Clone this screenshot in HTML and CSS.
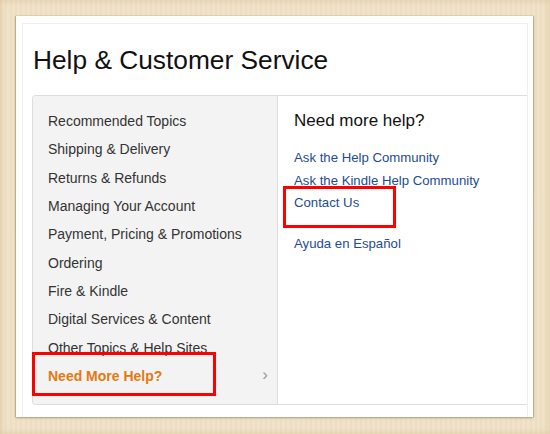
FILE: index.html
```html
<!DOCTYPE html>
<html lang="en">
<head>
  <meta charset="UTF-8">
  <title>Help &amp; Customer Service</title>
  <link rel="stylesheet" href="styles.css">
</head>
<body>
  <div class="frame">
    <div class="sheet">
      <div class="page">
        <h1>Help &amp; Customer Service</h1>
        <div class="help-box">
          <ul class="topics">
            <li>Recommended Topics</li>
            <li>Shipping &amp; Delivery</li>
            <li>Returns &amp; Refunds</li>
            <li>Managing Your Account</li>
            <li>Payment, Pricing &amp; Promotions</li>
            <li>Ordering</li>
            <li>Fire &amp; Kindle</li>
            <li>Digital Services &amp; Content</li>
            <li>Other Topics &amp; Help Sites</li>
            <li class="active">Need More Help?<span class="chevron">&#8250;</span></li>
          </ul>
          <div class="more">
            <h2>Need more help?</h2>
            <ul class="links">
              <li><a href="#">Ask the Help Community</a></li>
              <li><a href="#">Ask the Kindle Help Community</a></li>
              <li><a href="#">Contact Us</a></li>
              <li class="spaced"><a href="#">Ayuda en Español</a></li>
            </ul>
          </div>
        </div>
      </div>
      <!-- red annotation boxes drawn over the screenshot -->
      <div class="mark mark-nav"></div>
      <div class="mark mark-contact"></div>
    </div>
  </div>
</body>
</html>
```

FILE: styles.css
```css
body {
  margin: 0;
  font-family: "Liberation Sans", Arial, sans-serif;
  background-color: #efe1c6;
}
.frame {
  box-sizing: border-box;
  height: 434px;
  padding: 16px 17px 17px 16px;
  background:
    radial-gradient(ellipse at center, rgba(255,250,240,0.45), rgba(255,250,240,0) 70%),
    repeating-linear-gradient(90deg, rgba(200,170,120,0.06) 0 2px, rgba(255,255,255,0.05) 2px 5px),
    #efe1c6;
  box-shadow: inset 0 0 6px rgba(190,150,90,0.35);
}
.sheet {
  position: relative;
  height: 401px;
  box-sizing: border-box;
  padding: 7px 5px 0 6px;
  background-color: #ffffff;
  box-shadow: 0 1px 2px rgba(120,100,70,0.5), -1px 0 1px rgba(120,100,70,0.3), 1px 0 1px rgba(120,100,70,0.3);
}
.page {
  height: 394px;
  box-sizing: border-box;
  padding: 0 0 0 9px;
  border: 1px solid #efefef;
  border-bottom: none;
}
h1 {
  margin: 20px 0 19px 1px;
  font-size: 26.3px;
  line-height: 32px;
  font-weight: normal;
  color: #111111;
}
.help-box {
  display: flex;
  height: 310px;
  box-sizing: border-box;
  border: 1px solid #dddddd;
  border-right: none;
  border-radius: 4px 0 0 4px;
}
.topics {
  width: 245px;
  margin: 0;
  padding: 11px 0 0 15px;
  box-sizing: border-box;
  list-style: none;
  background-color: #f3f3f3;
  border-right: 1px solid #dddddd;
  border-radius: 4px 0 0 4px;
}
.topics li {
  position: relative;
  font-size: 14px;
  line-height: 28.33px;
  color: #333333;
}
.topics .active {
  font-weight: bold;
  color: #e47911;
}
.chevron {
  position: absolute;
  right: 9px;
  top: -1px;
  font-weight: normal;
  font-size: 17px;
  color: #999999;
}
.more {
  padding: 13px 16px;
}
h2 {
  margin: 0 0 14px 0;
  font-size: 17px;
  line-height: 24px;
  font-weight: normal;
  color: #111111;
}
.links {
  margin: 0;
  padding: 0;
  list-style: none;
}
.links li {
  font-size: 13.2px;
  line-height: 22.5px;
}
.links .spaced {
  margin-top: 18px;
}
.links a {
  color: #1d4b94;
  text-decoration: none;
}
.mark {
  position: absolute;
  border: 3px solid #ff0000;
  box-sizing: border-box;
}
.mark-nav {
  left: 16px;
  top: 336px;
  width: 184px;
  height: 44px;
}
.mark-contact {
  left: 267px;
  top: 170px;
  width: 113px;
  height: 42px;
}
```
